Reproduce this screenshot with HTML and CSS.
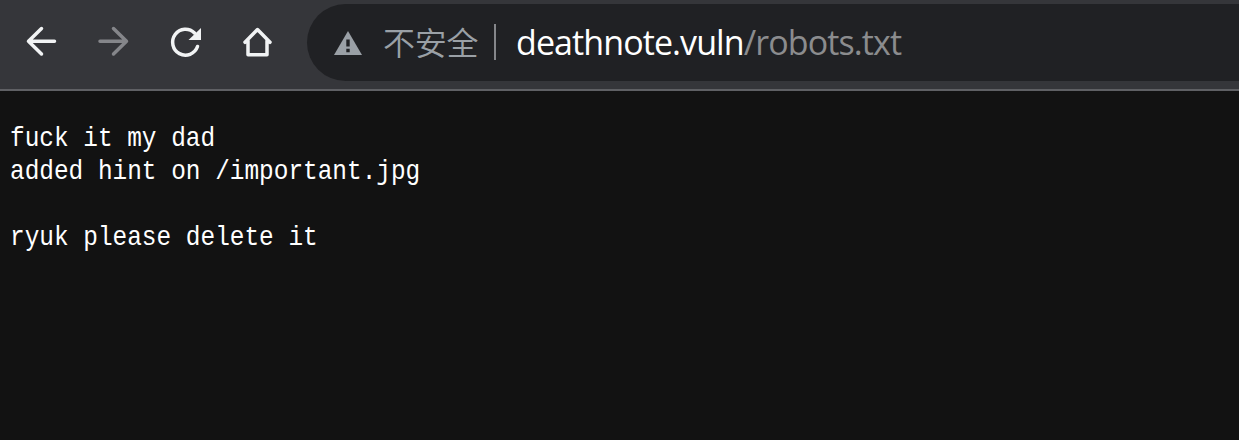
FILE: index.html
```html
<!DOCTYPE html>
<html lang="zh-CN">
<head>
<meta charset="utf-8">
<title>deathnote.vuln/robots.txt</title>
<link rel="stylesheet" href="styles.css">
</head>
<body>
<header class="toolbar">
  <nav class="controls">
    <svg class="icon" viewBox="0 0 40 40"><path d="M33.500 20.300H7.500M20.500 7.500L7.500 20.300L20.500 33"/></svg>
    <svg class="icon disabled" viewBox="0 0 40 40"><path d="M7 20.300H33M20.500 7.500L33.500 20.300L20.500 33"/></svg>
    <svg class="icon" viewBox="0 0 40 40"><path d="M32.500 25.500A12.800 13 0 1 1 29.500 12"/><path class="fill" d="M36 7V19H23.500Z"/></svg>
    <svg class="icon" viewBox="0 0 40 40"><path d="M8 21.300L20.500 8.500L33 21.300M11 19.500V33.700H30V19.500"/></svg>
  </nav>
  <div class="address">
    <svg class="warning" viewBox="0 0 28 24"><path class="triangle" d="M14 0L28 24H0Z"/><path class="mark" d="M12.300 8.500H15.700V15.500H12.300ZM12.300 17.700H15.700V21.200H12.300Z"/></svg>
    <span class="status">不安全</span>
    <span class="divider"></span>
    <span class="url">deathnote.vuln<span class="path">/robots.txt</span></span>
  </div>
</header>
<pre class="content">fuck it my dad
added hint on /important.jpg

ryuk please delete it</pre>
</body>
</html>
```
FILE: styles.css
```css
* { box-sizing: border-box; }
body { margin: 0; background: #121212; overflow: hidden; }
.toolbar {
  display: flex;
  height: 91px;
  padding-top: 4px;
  background: #35363a;
  border-bottom: 2px solid #5f6064;
}
.controls { display: flex; gap: 32px; flex: none; width: 307px; padding: 17px 0 0 21px; }
.icon { width: 40px; height: 40px; fill: none; stroke: #f1f3f4; stroke-width: 3.5; stroke-linecap: round; stroke-linejoin: round; }
.icon .fill { fill: #f1f3f4; stroke: none; }
.disabled { stroke: #85868a; }
.address {
  display: flex;
  align-items: center;
  flex: 1;
  height: 77px;
  padding: 0 0 2px 27px;
  border-radius: 39px 0 0 39px;
  background: #202124;
  white-space: nowrap;
}
.warning { flex: none; width: 28px; height: 24px; margin-top: 2px; }
.triangle { fill: #9aa0a6; }
.mark { fill: #202124; }
.status {
  width: 96px;
  margin: 0 0 2px 21px;
  font: 350 32px/48px "Noto Sans CJK SC", sans-serif;
  letter-spacing: -0.3px;
  color: #9aa0a6;
}
.divider { width: 2px; height: 36px; margin: 0 20px 0 15px; background: #85868a; }
.url { font: 34px/48px "Open Sans", sans-serif; letter-spacing: -0.91px; color: #fff; }
.path { color: #8b8c8e; }
.content {
  width: 600px;
  margin: 31px 0 0 9.7px;
  font: 28px/33px "Liberation Mono", monospace;
  color: #fff;
  transform: scaleX(.872);
  transform-origin: left top;
}
```
